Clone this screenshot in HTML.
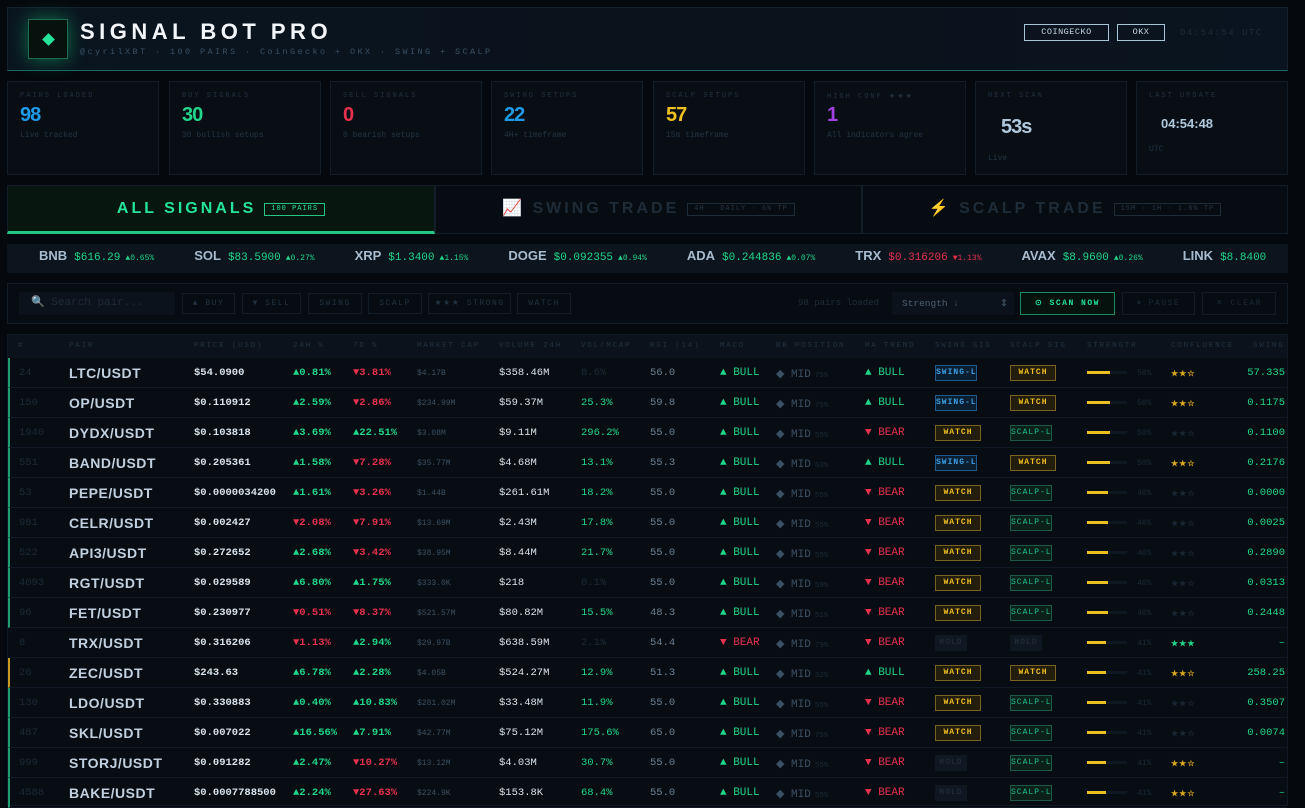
<!DOCTYPE html>
<html><head><meta charset="utf-8"><style>
*{box-sizing:border-box;margin:0;padding:0}
body{width:1305px;height:806px;overflow:hidden;background:#05090e;font-family:"Liberation Mono",monospace;color:#c4d2e0;position:relative}
i{font-style:normal}
.a{position:absolute}
.hdr{left:7px;top:7px;width:1281px;height:64px;border:1px solid #142230;background:linear-gradient(90deg,#0a1520,#0a121b 60%,#0a1420);border-bottom:1px solid #1e6a6a}
.logo{left:20px;top:11px;width:40px;height:40px;border:1px solid #1b6d4e;background:#07110e;box-shadow:0 0 18px #0f6e48}
.logo:after{content:"";position:absolute;left:15px;top:15px;width:9px;height:9px;background:#25e39a;transform:rotate(45deg)}
.title{left:72px;top:11px;font:bold 22px "Liberation Sans",sans-serif;letter-spacing:4.5px;color:#f2f6fa}
.sub{left:72px;top:39px;font-size:8.5px;letter-spacing:2.4px;color:#3a5064}
.hb{top:24px;height:17px;border:1px solid #a8c4d8;font-size:8.5px;color:#c8d8e8;text-align:center;line-height:15px;letter-spacing:.5px}
.card{top:81px;width:152px;height:94px;border:1px solid #131d28;background:#090e15}
.card .l{position:absolute;left:12px;top:10px;font-size:7px;letter-spacing:2px;color:#223040}
.card .v{position:absolute;left:12px;top:22px;font:bold 20px "Liberation Sans",sans-serif;letter-spacing:-1px}
.card .s{position:absolute;left:12px;top:49px;font-size:8px;color:#223344}
.tab{top:185px;height:49px;border:1px solid #131d28;background:#070c12;font:bold 16px "Liberation Sans",sans-serif;letter-spacing:3px;color:#1e2c3a;text-align:center;line-height:46px}
.tab .t{display:inline-block;font:7px "Liberation Mono",monospace;letter-spacing:1px;border:1px solid #1e2c3a;padding:0 6px;line-height:11px;vertical-align:3px;margin-left:8px;color:#263444}
.tick{left:7px;top:244px;width:1281px;height:29px;background:#0c141e;font-size:11px;line-height:29px;white-space:nowrap;overflow:hidden}
.tick b{font:bold 13px "Liberation Sans",sans-serif;color:#a8bccf;margin-right:7px}
.tick i{font-size:8px;color:#1fd68a;margin-left:5px}
.tick s{display:inline-block;width:40px}
.fb{left:7px;top:283px;width:1281px;height:41px;border:1px solid #131d28;background:#070c12}
.fbt{top:293px;height:21px;border:1px solid #131d28;font-size:8px;letter-spacing:1.5px;color:#223242;text-align:center;line-height:19px}
.tbl{left:7px;top:334px;width:1281px;height:472px;background:#080d13;border:1px solid #111a24}
.th{left:8px;top:335px;width:1279px;height:23px;background:#0b121b;font-size:7.5px;letter-spacing:1.8px;color:#223242}
.th span{position:absolute;top:7px}
.r{position:absolute;left:8px;width:1279px;height:30px;border-bottom:1px solid #111a24;border-left:2px solid transparent;font-size:10.5px;font-weight:bold}
.r.g{border-left-color:#1f9f70}.r.y{border-left-color:#c89a20}
.r span{position:absolute;top:9px;white-space:nowrap}
.r span:nth-child(1){left:9px;color:#1c2a38;font-weight:normal}
.r span:nth-child(2){left:59px;top:7px;font:bold 14px "Liberation Sans",sans-serif;letter-spacing:.5px;color:#c0d0e0}
.r span:nth-child(3){left:184px;color:#d8e2ec}
.r span:nth-child(4){left:283px}
.r span:nth-child(5){left:343px}
.r span:nth-child(6){left:407px;font-size:8px;top:11px;color:#3a5064;font-weight:normal}
.r span:nth-child(7){left:489px;color:#d8e2ec;font-weight:normal}
.r span:nth-child(8){left:571px;color:#1fd68a;font-weight:normal}
.r span:nth-child(9){left:640px;color:#6a8094;font-weight:normal}
.r span:nth-child(10){left:710px;font-weight:normal;font-size:11px}
.r span:nth-child(11){left:766px;color:#3a5064;font-weight:normal;font-size:11px}
.r span:nth-child(12){left:855px;font-weight:normal;font-size:11px}
.r span:nth-child(13){left:925px;top:7px}
.r span:nth-child(14){left:1000px;top:7px}
.r span:nth-child(15){left:1077px;top:13px;width:40px;height:3px;background:#0f1822}
.r span:nth-child(16){left:1127px;font-size:8px;color:#1c2a38;top:11px;font-weight:normal}
.r span:nth-child(17){left:1161px;font-size:8px;top:11px;color:#d8a820;letter-spacing:1px}
.r span:nth-child(18){right:2px;color:#1fd68a;font-weight:normal}
.up{color:#1fd68a}.dn{color:#e8304e}.dim{color:#1c2a38!important}
em{font-style:normal;font-size:7.5px;color:#1c2a38;margin-left:4px}
.b{display:inline-block;height:16px;line-height:14px;font-size:8px;letter-spacing:1px;text-align:center;border:1px solid;font-weight:bold}
.sw{width:42px;color:#3aa0e8;border-color:#1e5a8a;background:#0b1e30}
.wa{width:46px;color:#f0c020;border-color:#7a6320;background:#221d0c}
.sc{width:42px;color:#20c090;border-color:#1a5a46;background:#0a2019;font-weight:normal}
.ho{width:32px;color:#1e2a38;border-color:#0f1822;background:#0f1822}
.bar{display:block;height:3px;background:#eac020}
.sd{color:#1a2634!important}.sg{color:#1fd68a!important}
</style></head><body>
<div class="a hdr">
 <div class="a logo"></div>
 <div class="a title">SIGNAL BOT PRO</div>
 <div class="a sub">@cyrilXBT · 100 PAIRS · CoinGecko + OKX · SWING + SCALP</div>
</div>
<div class="a hb" style="left:1024px;width:85px">COINGECKO</div>
<div class="a hb" style="left:1117px;width:48px">OKX</div>
<div class="a" style="left:1180px;top:28px;font-size:9px;letter-spacing:1.5px;color:#1e2c3a">04:54:54 UTC</div>

<div class="a card" style="left:7px"><div class="l">PAIRS LOADED</div><div class="v" style="color:#1e9be8">98</div><div class="s">Live tracked</div></div>
<div class="a card" style="left:169px"><div class="l">BUY SIGNALS</div><div class="v" style="color:#1fd68a">30</div><div class="s">30 bullish setups</div></div>
<div class="a card" style="left:330px"><div class="l">SELL SIGNALS</div><div class="v" style="color:#e8304e">0</div><div class="s">0 bearish setups</div></div>
<div class="a card" style="left:491px"><div class="l">SWING SETUPS</div><div class="v" style="color:#1e9be8">22</div><div class="s">4H+ timeframe</div></div>
<div class="a card" style="left:653px"><div class="l">SCALP SETUPS</div><div class="v" style="color:#f0c020">57</div><div class="s">15m timeframe</div></div>
<div class="a card" style="left:814px"><div class="l">HIGH CONF ★★★</div><div class="v" style="color:#a040e0">1</div><div class="s">All indicators agree</div></div>
<div class="a card" style="left:975px"><div class="l">NEXT SCAN</div><div class="v" style="color:#b0c8dc;left:25px;top:34px">53s</div><div class="s" style="top:72px">Live</div></div>
<div class="a card" style="left:1136px"><div class="l">LAST UPDATE</div><div class="v" style="color:#b0c8dc;left:24px;top:34px;font-size:13px;letter-spacing:0">04:54:48</div><div class="s" style="top:63px">UTC</div></div>

<div class="a tab" style="left:7px;width:428px;background:#07170f;color:#25e39a;border-bottom:3px solid #25c585">ALL SIGNALS<span class="t" style="color:#25e39a;border-color:#25c585">100 PAIRS</span></div>
<div class="a tab" style="left:435px;width:427px"><span style="color:#e04040">📈</span> SWING TRADE<span class="t">4H · DAILY · 6% TP</span></div>
<div class="a tab" style="left:862px;width:426px"><span style="color:#f0c020">⚡</span> SCALP TRADE<span class="t">15M · 1H · 1.8% TP</span></div>

<div class="a tick"><span style="margin-left:32px"></span><b>BNB</b><span class="up">$616.29</span><i>▲0.65%</i><s></s><b>SOL</b><span class="up">$83.5900</span><i>▲0.27%</i><s></s><b>XRP</b><span class="up">$1.3400</span><i>▲1.15%</i><s></s><b>DOGE</b><span class="up">$0.092355</span><i>▲0.94%</i><s></s><b>ADA</b><span class="up">$0.244836</span><i>▲0.07%</i><s></s><b>TRX</b><span class="dn">$0.316206</span><i style="color:#e8304e">▼1.13%</i><s></s><b>AVAX</b><span class="up">$8.9600</span><i>▲0.26%</i><s></s><b>LINK</b><span class="up">$8.8400</span></div>

<div class="a fb"></div>
<div class="a" style="left:19px;top:292px;width:156px;height:23px;background:#0b121b;font-size:11px;color:#1e2c3a;line-height:23px;padding-left:12px">🔍 Search pair...</div>
<div class="a fbt" style="left:182px;width:53px">▲ BUY</div>
<div class="a fbt" style="left:242px;width:59px">▼ SELL</div>
<div class="a fbt" style="left:308px;width:54px">SWING</div>
<div class="a fbt" style="left:368px;width:54px">SCALP</div>
<div class="a fbt" style="left:428px;width:83px">★★★ STRONG</div>
<div class="a fbt" style="left:517px;width:54px">WATCH</div>
<div class="a" style="left:798px;top:298px;font-size:9px;color:#1e2c3a">98 pairs loaded</div>
<div class="a" style="left:892px;top:292px;width:122px;height:23px;background:#0b121b;font-size:9.5px;color:#4a6074;line-height:23px;padding-left:10px">Strength ↓<span style="position:absolute;right:6px">⇕</span></div>
<div class="a fbt" style="left:1020px;width:95px;height:23px;line-height:21px;top:292px;border-color:#1f8a60;color:#25e39a;font-weight:bold;background:#06120d">⊙ SCAN NOW</div>
<div class="a fbt" style="left:1122px;width:73px;height:23px;line-height:21px;top:292px;color:#1c2a38">⏸ PAUSE</div>
<div class="a fbt" style="left:1202px;width:74px;height:23px;line-height:21px;top:292px;color:#1c2a38">✕ CLEAR</div>

<div class="a tbl"></div>
<div class="a th"><span style="left:10px">#</span><span style="left:61px">PAIR</span><span style="left:186px">PRICE (USD)</span><span style="left:285px">24H %</span><span style="left:345px">7D %</span><span style="left:409px">MARKET CAP</span><span style="left:491px">VOLUME 24H</span><span style="left:573px">VOL/MCAP</span><span style="left:642px">RSI (14)</span><span style="left:712px">MACD</span><span style="left:768px">BB POSITION</span><span style="left:857px">MA TREND</span><span style="left:927px">SWING SIG</span><span style="left:1002px">SCALP SIG</span><span style="left:1079px">STRENGTH</span><span style="left:1163px">CONFLUENCE</span><span style="left:1245px">SWING</span></div>

<div class="r g" style="top:358px"><span>24</span><span>LTC/USDT</span><span>$54.0900</span><span class="up">▲0.81%</span><span class="dn">▼3.81%</span><span>$4.17B</span><span>$358.46M</span><span class="dim">8.6%</span><span>56.0</span><span class="up">▲ BULL</span><span>◆ MID<em>75%</em></span><span class="up">▲ BULL</span><span><i class="b sw">SWING-L</i></span><span><i class="b wa">WATCH</i></span><span><i class="bar" style="width:23px"></i></span><span>50%</span><span>★★☆</span><span>57.335</span></div>
<div class="r g" style="top:388px"><span>150</span><span>OP/USDT</span><span>$0.110912</span><span class="up">▲2.59%</span><span class="dn">▼2.86%</span><span>$234.99M</span><span>$59.37M</span><span>25.3%</span><span>59.8</span><span class="up">▲ BULL</span><span>◆ MID<em>75%</em></span><span class="up">▲ BULL</span><span><i class="b sw">SWING-L</i></span><span><i class="b wa">WATCH</i></span><span><i class="bar" style="width:23px"></i></span><span>50%</span><span>★★☆</span><span>0.1175</span></div>
<div class="r g" style="top:418px"><span>1940</span><span>DYDX/USDT</span><span>$0.103818</span><span class="up">▲3.69%</span><span class="up">▲22.51%</span><span>$3.08M</span><span>$9.11M</span><span>296.2%</span><span>55.0</span><span class="up">▲ BULL</span><span>◆ MID<em>55%</em></span><span class="dn">▼ BEAR</span><span><i class="b wa">WATCH</i></span><span><i class="b sc">SCALP-L</i></span><span><i class="bar" style="width:23px"></i></span><span>50%</span><span class="sd">★★☆</span><span>0.1100</span></div>
<div class="r g" style="top:448px"><span>551</span><span>BAND/USDT</span><span>$0.205361</span><span class="up">▲1.58%</span><span class="dn">▼7.28%</span><span>$35.77M</span><span>$4.68M</span><span>13.1%</span><span>55.3</span><span class="up">▲ BULL</span><span>◆ MID<em>63%</em></span><span class="up">▲ BULL</span><span><i class="b sw">SWING-L</i></span><span><i class="b wa">WATCH</i></span><span><i class="bar" style="width:23px"></i></span><span>50%</span><span>★★☆</span><span>0.2176</span></div>
<div class="r g" style="top:478px"><span>53</span><span>PEPE/USDT</span><span>$0.0000034200</span><span class="up">▲1.61%</span><span class="dn">▼3.26%</span><span>$1.44B</span><span>$261.61M</span><span>18.2%</span><span>55.0</span><span class="up">▲ BULL</span><span>◆ MID<em>55%</em></span><span class="dn">▼ BEAR</span><span><i class="b wa">WATCH</i></span><span><i class="b sc">SCALP-L</i></span><span><i class="bar" style="width:21px"></i></span><span>46%</span><span class="sd">★★☆</span><span>0.0000</span></div>
<div class="r g" style="top:508px"><span>981</span><span>CELR/USDT</span><span>$0.002427</span><span class="dn">▼2.08%</span><span class="dn">▼7.91%</span><span>$13.69M</span><span>$2.43M</span><span>17.8%</span><span>55.0</span><span class="up">▲ BULL</span><span>◆ MID<em>55%</em></span><span class="dn">▼ BEAR</span><span><i class="b wa">WATCH</i></span><span><i class="b sc">SCALP-L</i></span><span><i class="bar" style="width:21px"></i></span><span>46%</span><span class="sd">★★☆</span><span>0.0025</span></div>
<div class="r g" style="top:538px"><span>522</span><span>API3/USDT</span><span>$0.272652</span><span class="up">▲2.68%</span><span class="dn">▼3.42%</span><span>$38.95M</span><span>$8.44M</span><span>21.7%</span><span>55.0</span><span class="up">▲ BULL</span><span>◆ MID<em>55%</em></span><span class="dn">▼ BEAR</span><span><i class="b wa">WATCH</i></span><span><i class="b sc">SCALP-L</i></span><span><i class="bar" style="width:21px"></i></span><span>46%</span><span class="sd">★★☆</span><span>0.2890</span></div>
<div class="r g" style="top:568px"><span>4093</span><span>RGT/USDT</span><span>$0.029589</span><span class="up">▲6.80%</span><span class="up">▲1.75%</span><span>$333.0K</span><span>$218</span><span class="dim">0.1%</span><span>55.0</span><span class="up">▲ BULL</span><span>◆ MID<em>59%</em></span><span class="dn">▼ BEAR</span><span><i class="b wa">WATCH</i></span><span><i class="b sc">SCALP-L</i></span><span><i class="bar" style="width:21px"></i></span><span>46%</span><span class="sd">★★☆</span><span>0.0313</span></div>
<div class="r g" style="top:598px"><span>96</span><span>FET/USDT</span><span>$0.230977</span><span class="dn">▼0.51%</span><span class="dn">▼8.37%</span><span>$521.57M</span><span>$80.82M</span><span>15.5%</span><span>48.3</span><span class="up">▲ BULL</span><span>◆ MID<em>51%</em></span><span class="dn">▼ BEAR</span><span><i class="b wa">WATCH</i></span><span><i class="b sc">SCALP-L</i></span><span><i class="bar" style="width:21px"></i></span><span>46%</span><span class="sd">★★☆</span><span>0.2448</span></div>
<div class="r" style="top:628px"><span>8</span><span>TRX/USDT</span><span>$0.316206</span><span class="dn">▼1.13%</span><span class="up">▲2.94%</span><span>$29.97B</span><span>$638.59M</span><span class="dim">2.1%</span><span>54.4</span><span class="dn">▼ BEAR</span><span>◆ MID<em>79%</em></span><span class="dn">▼ BEAR</span><span><i class="b ho">HOLD</i></span><span><i class="b ho">HOLD</i></span><span><i class="bar" style="width:19px"></i></span><span>41%</span><span class="sg">★★★</span><span>–</span></div>
<div class="r y" style="top:658px"><span>26</span><span>ZEC/USDT</span><span>$243.63</span><span class="up">▲6.78%</span><span class="up">▲2.28%</span><span>$4.05B</span><span>$524.27M</span><span>12.9%</span><span>51.3</span><span class="up">▲ BULL</span><span>◆ MID<em>32%</em></span><span class="up">▲ BULL</span><span><i class="b wa">WATCH</i></span><span><i class="b wa">WATCH</i></span><span><i class="bar" style="width:19px"></i></span><span>41%</span><span>★★☆</span><span>258.25</span></div>
<div class="r g" style="top:688px"><span>130</span><span>LDO/USDT</span><span>$0.330883</span><span class="up">▲0.40%</span><span class="up">▲10.83%</span><span>$281.02M</span><span>$33.48M</span><span>11.9%</span><span>55.0</span><span class="up">▲ BULL</span><span>◆ MID<em>55%</em></span><span class="dn">▼ BEAR</span><span><i class="b wa">WATCH</i></span><span><i class="b sc">SCALP-L</i></span><span><i class="bar" style="width:19px"></i></span><span>41%</span><span class="sd">★★☆</span><span>0.3507</span></div>
<div class="r g" style="top:718px"><span>487</span><span>SKL/USDT</span><span>$0.007022</span><span class="up">▲16.56%</span><span class="up">▲7.91%</span><span>$42.77M</span><span>$75.12M</span><span>175.6%</span><span>65.0</span><span class="up">▲ BULL</span><span>◆ MID<em>75%</em></span><span class="dn">▼ BEAR</span><span><i class="b wa">WATCH</i></span><span><i class="b sc">SCALP-L</i></span><span><i class="bar" style="width:19px"></i></span><span>41%</span><span class="sd">★★☆</span><span>0.0074</span></div>
<div class="r g" style="top:748px"><span>999</span><span>STORJ/USDT</span><span>$0.091282</span><span class="up">▲2.47%</span><span class="dn">▼10.27%</span><span>$13.12M</span><span>$4.03M</span><span>30.7%</span><span>55.0</span><span class="up">▲ BULL</span><span>◆ MID<em>55%</em></span><span class="dn">▼ BEAR</span><span><i class="b ho">HOLD</i></span><span><i class="b sc">SCALP-L</i></span><span><i class="bar" style="width:19px"></i></span><span>41%</span><span>★★☆</span><span>–</span></div>
<div class="r g" style="top:778px"><span>4588</span><span>BAKE/USDT</span><span>$0.0007788500</span><span class="up">▲2.24%</span><span class="dn">▼27.63%</span><span>$224.9K</span><span>$153.8K</span><span>68.4%</span><span>55.0</span><span class="up">▲ BULL</span><span>◆ MID<em>55%</em></span><span class="dn">▼ BEAR</span><span><i class="b ho">HOLD</i></span><span><i class="b sc">SCALP-L</i></span><span><i class="bar" style="width:19px"></i></span><span>41%</span><span>★★☆</span><span>–</span></div>
</body></html>
